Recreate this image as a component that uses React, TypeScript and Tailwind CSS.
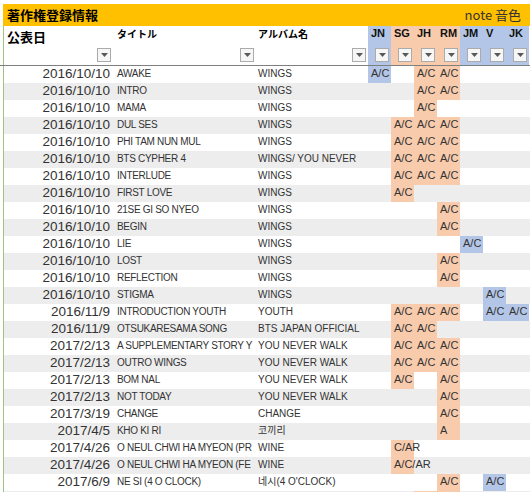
import React from 'react';

const cols = ['JN', 'SG', 'JH', 'RM', 'JM', 'V', 'JK'];
const blue = new Set(['JN', 'JM', 'V', 'JK']);

type Row = { date: string; title: string; album: string; cells: Record<string, string> };

const ac = (...keys: string[]) => Object.fromEntries(keys.map((k) => [k, 'A/C']));

const rows: Row[] = [
  { date: '2016/10/10', title: 'AWAKE', album: 'WINGS', cells: ac('JN', 'JH', 'RM') },
  { date: '2016/10/10', title: 'INTRO', album: 'WINGS', cells: ac('JH', 'RM') },
  { date: '2016/10/10', title: 'MAMA', album: 'WINGS', cells: ac('JH') },
  { date: '2016/10/10', title: 'DUL SES', album: 'WINGS', cells: ac('SG', 'JH', 'RM') },
  { date: '2016/10/10', title: 'PHI TAM NUN MUL', album: 'WINGS', cells: ac('SG', 'JH', 'RM') },
  { date: '2016/10/10', title: 'BTS CYPHER 4', album: 'WINGS/ YOU NEVER', cells: ac('SG', 'JH', 'RM') },
  { date: '2016/10/10', title: 'INTERLUDE', album: 'WINGS', cells: ac('SG', 'JH', 'RM') },
  { date: '2016/10/10', title: 'FIRST LOVE', album: 'WINGS', cells: ac('SG') },
  { date: '2016/10/10', title: '21SE GI SO NYEO', album: 'WINGS', cells: ac('RM') },
  { date: '2016/10/10', title: 'BEGIN', album: 'WINGS', cells: ac('RM') },
  { date: '2016/10/10', title: 'LIE', album: 'WINGS', cells: ac('JM') },
  { date: '2016/10/10', title: 'LOST', album: 'WINGS', cells: ac('RM') },
  { date: '2016/10/10', title: 'REFLECTION', album: 'WINGS', cells: ac('RM') },
  { date: '2016/10/10', title: 'STIGMA', album: 'WINGS', cells: ac('V') },
  { date: '2016/11/9', title: 'INTRODUCTION YOUTH', album: 'YOUTH', cells: ac('SG', 'JH', 'RM', 'V', 'JK') },
  { date: '2016/11/9', title: 'OTSUKARESAMA SONG', album: 'BTS JAPAN OFFICIAL', cells: ac('SG', 'JH') },
  { date: '2017/2/13', title: 'A SUPPLEMENTARY STORY Y', album: 'YOU NEVER WALK', cells: ac('SG', 'JH', 'RM') },
  { date: '2017/2/13', title: 'OUTRO WINGS', album: 'YOU NEVER WALK', cells: ac('SG', 'JH', 'RM') },
  { date: '2017/2/13', title: 'BOM NAL', album: 'YOU NEVER WALK', cells: ac('SG', 'RM') },
  { date: '2017/2/13', title: 'NOT TODAY', album: 'YOU NEVER WALK', cells: ac('RM') },
  { date: '2017/3/19', title: 'CHANGE', album: 'CHANGE', cells: ac('RM') },
  { date: '2017/4/5', title: 'KHO KI RI', album: '코끼리', cells: { RM: 'A' } },
  { date: '2017/4/26', title: 'O NEUL CHWI HA MYEON (PR', album: 'WINE', cells: { SG: 'C/AR' } },
  { date: '2017/4/26', title: 'O NEUL CHWI HA MYEON (FE', album: 'WINE', cells: { SG: 'A/C/AR' } },
  { date: '2017/6/9', title: 'NE SI (4 O CLOCK)', album: '네시(4 O\'CLOCK)', cells: ac('RM', 'V') },
  { date: '', title: '', album: '', cells: { JH: '', RM: '' } },
];

function Dropdown() {
  return (
    <div className="w-[14px] h-[14px] border border-[#ababab] bg-[#f6f6f6] flex items-center justify-center">
      <svg width="7" height="4" viewBox="0 0 7 4">
        <path d="M0 0h7L3.5 4z" fill="#595959" />
      </svg>
    </div>
  );
}

const grid = 'grid grid-cols-[109px_142px_113px_repeat(7,23px)]';

export default function App() {
  return (
    <div className="w-[530px] h-[492px] overflow-hidden bg-white pt-[4px] text-[#222] font-['Liberation_Sans','Noto_Sans_CJK_JP','Noto_Sans_CJK_KR',sans-serif]">
      {/* タイトルバー */}
      <div className="ml-[3px] h-[22px] bg-[#ffc000] flex items-center justify-between pl-[4px] pr-[9px]">
        <span className="text-[13px] leading-[16px] font-bold font-['Noto_Sans_CJK_JP',sans-serif] text-black">著作権登録情報</span>
        <span className="text-[13px] leading-[16px] font-['Noto_Sans_CJK_JP',sans-serif] text-[#333]">note 音色</span>
      </div>

      {/* ヘッダー */}
      <div className="ml-[3px] border-l border-[#9cc584]">
        <div className={`${grid} h-[39px]`}>
          <div className="flex flex-col justify-between">
            <span className="pl-[3px] pt-[3px] text-[13px] leading-[16px] font-bold font-['Noto_Sans_CJK_JP',sans-serif] text-black">公表日</span>
            <div className="self-end mr-[2px] mb-[3px]"><Dropdown /></div>
          </div>
          <div className="flex flex-col justify-between">
            <span className="pl-[4px] pt-[2px] text-[10px] leading-[12px] font-bold font-['Noto_Sans_CJK_JP',sans-serif] text-black">タイトル</span>
            <div className="self-end mr-[1px] mb-[3px]"><Dropdown /></div>
          </div>
          <div className="flex flex-col justify-between">
            <span className="pl-[3px] pt-[2px] text-[10px] leading-[12px] font-bold font-['Noto_Sans_CJK_JP',sans-serif] text-black">アルバム名</span>
            <div className="self-end mr-[2px] mb-[3px]"><Dropdown /></div>
          </div>
          {cols.map((c) => (
            <div key={c} className={`flex flex-col justify-between ${blue.has(c) ? 'bg-[#b4c6e7]' : 'bg-[#f8cbad]'}`}>
              <span className="pl-[3px] pt-[1px] text-[11px] leading-[13px] font-bold text-[#111]">{c}</span>
              <div className="self-end mr-[2px] mb-[3px]"><Dropdown /></div>
            </div>
          ))}
        </div>
      </div>
      <div className="h-px bg-[#7f7f7f]" />

      {/* データ */}
      <div className="ml-[3px] border-l border-[#9cc584]">
        {rows.map((r, i) => (
          <div key={i} className={`${grid} h-[17px] items-stretch ${i % 2 === 1 ? 'bg-[#ededed]' : 'bg-white'}`}>
            <div className="pr-[3px] text-right text-[13.5px] leading-[14px] pt-[1px] text-[#333]">{r.date}</div>
            <div className="pl-[4px] text-[10px] tracking-[-0.3px] leading-[15px] whitespace-nowrap overflow-hidden text-[#333]">{r.title}</div>
            <div className="pl-[3px] text-[10px] leading-[15px] whitespace-nowrap overflow-hidden text-[#333]">{r.album}</div>
            {cols.map((c) => {
              const v = r.cells[c];
              return (
                <div
                  key={c}
                  className={`pl-[3px] text-[11px] leading-[15px] whitespace-nowrap text-[#333] ${v !== undefined ? (blue.has(c) ? 'bg-[#b4c6e7]' : 'bg-[#f8cbad]') : ''}`}
                >
                  {v ?? ''}
                </div>
              );
            })}
          </div>
        ))}
      </div>
    </div>
  );
}
